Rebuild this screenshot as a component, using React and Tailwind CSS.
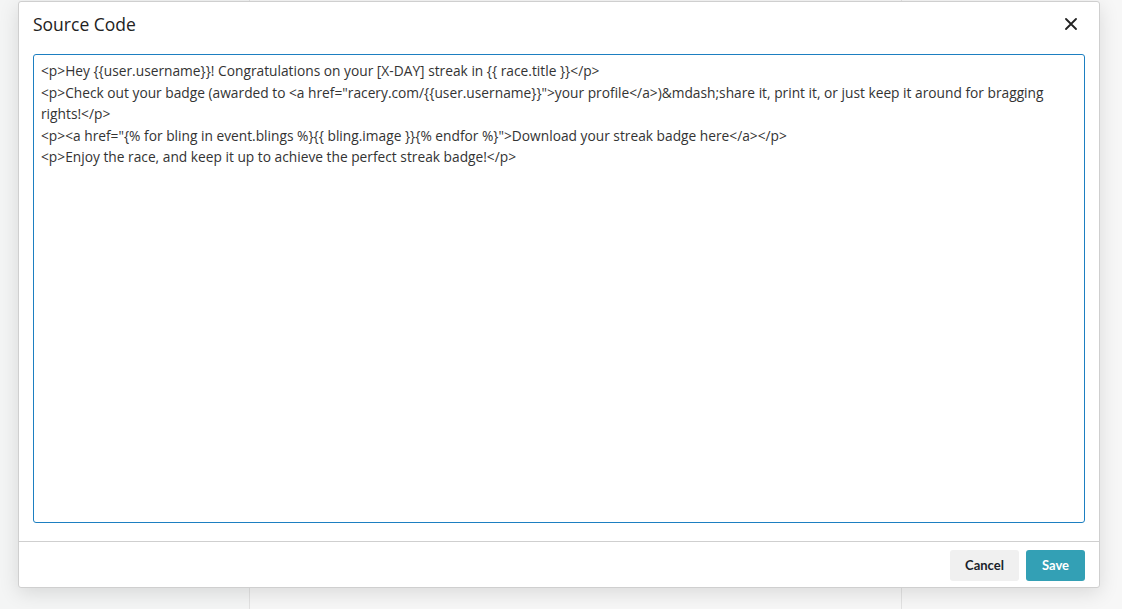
import React from "react";

const TEXT = `<p>Hey {{user.username}}! Congratulations on your [X-DAY] streak in {{ race.title }}</p>
<p>Check out your badge (awarded to <a href="racery.com/{{user.username}}">your profile</a>)&mdash;share it, print it, or just keep it around for bragging rights!</p>
<p><a href="{% for bling in event.blings %}{{ bling.image }}{% endfor %}">Download your streak badge here</a></p>
<p>Enjoy the race, and keep it up to achieve the perfect streak badge!</p>`;

export default function App() {
  return (
    <div className="relative w-[1122px] h-[609px] overflow-hidden bg-[#f4f5f5]" style={{ fontFamily: '"Open Sans", "Noto Sans", sans-serif' }}>
      {/* page behind the modal */}
      <div className="flex h-full">
        <div className="w-[249px] bg-[#f4f5f5]" />
        <div className="w-[653px] border-l border-r border-[#e2e2e2] bg-[#f7f7f7]" />
        <div className="flex-1 bg-[#f7f7f7]" />
      </div>
      {/* modal */}
      <div className="absolute left-[18px] top-[1px] w-[1082px] h-[587px] bg-white border border-[#cfcfcf] rounded-[3px] shadow-[0_5px_20px_rgba(0,0,0,0.12)] flex flex-col">
        <div className="flex items-center justify-between h-[44px] pl-[14px] pr-[22px]">
          <h1 className="text-[17.5px] text-[#222] font-normal">Source Code</h1>
          <button className="text-[#222]">
            <svg width="12" height="12" viewBox="0 0 12 12" fill="none" stroke="#222" strokeWidth="1.8" strokeLinecap="round">
              <path d="M1 1L11 11M11 1L1 11" />
            </svg>
          </button>
        </div>
        <div className="px-[14px] pt-[8px] pb-[18px] flex-1 flex">
          <textarea
            readOnly
            value={TEXT}
            className="w-full h-[469px] resize-none border border-[#1d7fc1] rounded-[3px] px-[7px] py-[5px] text-[13.75px] leading-[21.5px] text-[#333] outline-none"
            style={{ fontFamily: '"Open Sans", "Noto Sans", sans-serif' }}
          />
        </div>
        <div className="border-t border-[#cfcfcf] flex justify-end items-center gap-[7px] h-[46px] pr-[14px] pt-[1px]">
          <button className="h-[31px] w-[69px] pt-[2px] rounded-[3px] bg-[#f0f0f0] text-[#1a1f2b] text-[13px] font-bold" style={{ fontFamily: 'Lato, sans-serif' }}>Cancel</button>
          <button className="h-[31px] w-[59px] pt-[2px] rounded-[3px] bg-[#33a0b5] text-white text-[13px] font-bold" style={{ fontFamily: 'Lato, sans-serif' }}>Save</button>
        </div>
      </div>
    </div>
  );
}
